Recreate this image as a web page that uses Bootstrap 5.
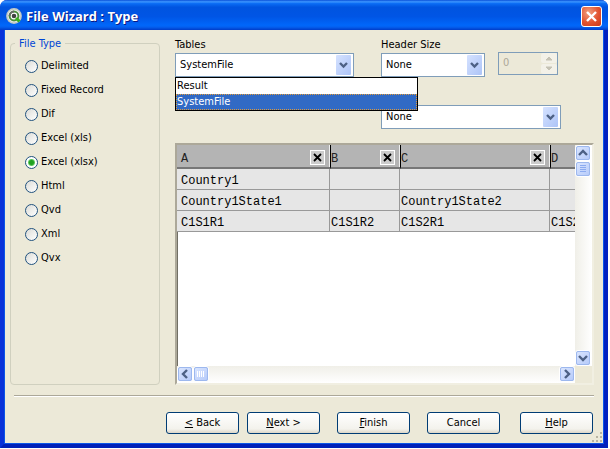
<!DOCTYPE html>
<html lang="en">
<head>
<meta charset="utf-8">
<meta name="viewport" content="width=device-width, initial-scale=1">
<title>File Wizard : Type</title>
<link href="https://cdn.jsdelivr.net/npm/bootstrap@5.3.0/dist/css/bootstrap.min.css" rel="stylesheet">
<style>
body{background:#fff;color:#000;font-family:"DejaVu Sans Condensed","Noto Sans",sans-serif;font-size:11px;line-height:16px}
.wizard{min-height:calc(100vh - 1px);margin-right:2px;background:#ece9d8;border:solid #0831d9;border-width:0 4px 4px;border-color:#0831d9 #0020c0 #0020b8 #0831d9;box-shadow:inset 1px -1px #0a55e8,inset -1px 0 #0a55e8;border-radius:7px 7px 0 0}
.titlebar{height:30px;margin:0 -4px;padding:2px 6px 0;border-radius:7px 7px 0 0;background:linear-gradient(#0a50d8 0,#3c96ff 6%,#0a6cf4 12%,#0054e0 24%,#0055e5 55%,#0067fa 84%,#0460f0 90%,#003cc8 100%)}
.titlebar h1{font:bold 13px/20px "Open Sans","Noto Sans",sans-serif;color:#fff;text-shadow:1px 1px #0a1883}
.close-btn{width:21px;height:21px;border:1px solid #fff;border-radius:3px;background:radial-gradient(circle at 35% 30%,#f0a080,#e25330 55%,#c8381a);line-height:0}
.main{padding:7px 10px 10px 6px;gap:15px}
.types{width:150px;position:relative;border:1px solid #d0d0bf;border-radius:4px;margin-top:6px;padding:10px 14px}
.types legend{position:absolute;top:-8px;left:4px;width:auto;padding:0 4px;margin:0;background:#ece9d8;color:#0046d5;font-size:11px;line-height:16px}
.types .form-check{height:24px;gap:3px;min-height:0;padding:0;margin:0}
.types .form-check-input{float:none;width:13px;height:13px;margin:0;border:1px solid #21527f;background:linear-gradient(135deg,#dcdcd7,#fff)}
.types .form-check-input:checked{background:radial-gradient(circle,#21a121 0 2px,#5cc55c 3px,#fff 4px)}
.fields{display:grid;grid-template-columns:206px 117px auto;justify-content:start}
.fields label{display:block;height:16px;line-height:16px}
.combo{height:24px;padding:0 24px 0 4px;border:1px solid #7f9db9;border-radius:0;background-color:#fff;background-position:right 1px center;background-size:17px 20px;font-size:11px;line-height:22px;color:#000;--bs-form-select-bg-img:url("data:image/svg+xml,%3Csvg xmlns='http://www.w3.org/2000/svg' viewBox='0 0 17 20'%3E%3Cdefs%3E%3ClinearGradient id='g' x2='1' y2='1'%3E%3Cstop stop-color='%23d5e2ff'/%3E%3Cstop offset='1' stop-color='%23adc4f7'/%3E%3C/linearGradient%3E%3C/defs%3E%3Crect x='1' width='15' height='20' rx='1' fill='url(%23g)'/%3E%3Cpath d='M5 8l3.500 3.500 3.500-3.500' fill='none' stroke='%234d6185' stroke-width='2.4'/%3E%3C/svg%3E")}
.w-tables{width:179px}.w-header{width:104px}.w-extra{width:180px}
.options{position:absolute;top:40px;left:0;width:243px;z-index:5;border:1px solid #000;border-radius:0;background:#fff}
.options .list-group-item{height:16px;padding:0 1px;border:0;line-height:16px;background:#fff;color:#000}
.options .list-group-item.active{background:#316ac5;color:#fff;outline:1px dotted #e09a3a;outline-offset:-1px;margin:0}
.spinner{width:60px;height:23px;border:1px solid #7f9db9;margin-top:15px}
.spinner input{min-width:0;border:0;background:none;padding:0 0 2px 4px;color:#aca899;font-size:11px}
.spinner button{width:16px;height:10px;border:0;padding:0;background:#f3f1e8;border-radius:2px;line-height:0}
.extra{grid-column:2/4;margin-top:28px}
.preview{margin-top:14px;border:2px solid;border-color:#aca899 #f1efe2 #f1efe2 #aca899;background:#fff;display:grid;grid-template:minmax(0,1fr) 17px/minmax(0,1fr) 17px;box-shadow:inset 1px 1px #716f64}
.sheet{overflow:hidden}
.sheet table{width:443px;table-layout:fixed;border-collapse:separate;border-spacing:0;font:12px/16px "Liberation Mono",monospace}
.sheet th{height:23px;padding:2px 4px 0;font-weight:400;color:#222;background:#b4b4b4;border-bottom:2px solid #777;box-shadow:inset -1px 0 #eee}
.sheet th span{padding-top:4px}
.sheet td{height:21px;padding:4px 4px 0;line-height:16px;background:#e6e6e6;border:solid #999;border-width:0 1px 1px 0;white-space:nowrap}
.sheet th+th{border-left:1px solid #000;padding-left:0}
.sheet td+td{padding-left:1px}
.c-a{width:153px}.c-b,.c-d{width:70px}.c-c{width:150px}
.col-x{width:15px;height:15px;padding:0;border:1px solid #fff;background:#ccc;line-height:0;margin-right:1px}
.track{background:linear-gradient(90deg,#f0efe8,#fff)}
.track-h{background:linear-gradient(#f0efe8,#fff)}
.corner{background:#ece9d8}
.sb{width:16px;height:16px;padding:0;line-height:0;border:1px solid #fff;outline:1px solid #9db8ee;outline-offset:-2px;border-radius:3px;background:linear-gradient(135deg,#dce7ff,#b4c9f9);flex:none}
.rule{margin:0 10px;height:2px;background:#aca899;border-bottom:1px solid #fff}
.actions{padding:15px 11px 10px}
.actions .btn{width:73px;height:22px;padding:0;border:1px solid #003c74;border-radius:3px;background:linear-gradient(#fff,#f3f2ec 80%,#dcd6c8);color:#000;font-size:11px;line-height:20px}
.g-s{margin-right:8px}.g-m{margin-right:17px}.g-l{margin-right:20px}
.grip{position:absolute;right:1px;bottom:1px}
</style>
<script src="https://cdn.jsdelivr.net/npm/bootstrap@5.3.0/dist/js/bootstrap.bundle.min.js"></script>
</head>
<body>
<div class="wizard d-flex flex-column position-relative">
  <header class="titlebar d-flex align-items-center">
    <svg width="16" height="16" viewBox="0 0 16 16" aria-hidden="true"><circle cx="8" cy="8" r="7.900" fill="#c4cbc6"/><circle cx="8" cy="8" r="6.200" fill="#f2f4f0"/><circle cx="8" cy="8" r="4.400" fill="#fff" stroke="#4a8f3c" stroke-width="2"/><path d="M3.600 8a4.400 4.400 0 0 1 4.400-4.400" fill="none" stroke="#666c66" stroke-width="2"/><circle cx="8" cy="8" r="2.300" fill="#3f4440"/><path d="M10 10l3.500 3.500" stroke="#35b01e" stroke-width="3"/></svg>
    <h1 class="m-0 ms-1 flex-fill">File Wizard : Type</h1>
    <button type="button" class="close-btn p-0" aria-label="Close"><svg width="19" height="19" viewBox="0 0 19 19"><path d="M5 5l9 9M14 5l-9 9" stroke="#fff" stroke-width="2.4"/></svg></button>
  </header>
  <main class="main d-flex flex-fill">
    <fieldset class="types flex-shrink-0">
      <legend>File Type</legend>
      <div class="form-check d-flex align-items-center"><input class="form-check-input" type="radio" name="type" id="t1"><label for="t1">Delimited</label></div>
      <div class="form-check d-flex align-items-center"><input class="form-check-input" type="radio" name="type" id="t2"><label for="t2">Fixed Record</label></div>
      <div class="form-check d-flex align-items-center"><input class="form-check-input" type="radio" name="type" id="t3"><label for="t3">Dif</label></div>
      <div class="form-check d-flex align-items-center"><input class="form-check-input" type="radio" name="type" id="t4"><label for="t4">Excel (xls)</label></div>
      <div class="form-check d-flex align-items-center"><input class="form-check-input" type="radio" name="type" id="t5" checked><label for="t5">Excel (xlsx)</label></div>
      <div class="form-check d-flex align-items-center"><input class="form-check-input" type="radio" name="type" id="t6"><label for="t6">Html</label></div>
      <div class="form-check d-flex align-items-center"><input class="form-check-input" type="radio" name="type" id="t7"><label for="t7">Qvd</label></div>
      <div class="form-check d-flex align-items-center"><input class="form-check-input" type="radio" name="type" id="t8"><label for="t8">Xml</label></div>
      <div class="form-check d-flex align-items-center"><input class="form-check-input" type="radio" name="type" id="t9"><label for="t9">Qvx</label></div>
    </fieldset>
    <section class="d-flex flex-column flex-fill">
      <div class="fields">
        <div class="position-relative">
          <label for="tables">Tables</label>
          <select id="tables" class="form-select combo w-tables"><option>Result</option><option selected>SystemFile</option></select>
          <div class="list-group options">
            <button type="button" class="list-group-item list-group-item-action">Result</button>
            <button type="button" class="list-group-item list-group-item-action active">SystemFile</button>
          </div>
        </div>
        <div>
          <label for="header">Header Size</label>
          <select id="header" class="form-select combo w-header"><option>None</option></select>
        </div>
        <div class="spinner d-flex">
          <input type="text" class="flex-fill" value="0" aria-label="Header lines" disabled>
          <div class="d-flex flex-column">
            <button type="button" aria-label="Increase" disabled><svg width="16" height="10"><path d="M5 7l3-3 3 3z" fill="#c5c2b4" stroke="#c5c2b4"/></svg></button>
            <button type="button" class="mt-auto" aria-label="Decrease" disabled><svg width="16" height="10"><path d="M5 3l3 3 3-3z" fill="#c5c2b4" stroke="#c5c2b4"/></svg></button>
          </div>
        </div>
        <div class="extra"><select class="form-select combo w-extra" aria-label="Labels"><option>None</option></select></div>
      </div>
      <div class="preview flex-fill">
        <div class="sheet">
          <table>
            <colgroup><col class="c-a"><col class="c-b"><col class="c-c"><col class="c-d"></colgroup>
            <thead><tr>
              <th><div class="d-flex justify-content-between align-items-center"><span>A</span><button type="button" class="col-x" aria-label="Remove A"><svg width="13" height="13"><path d="M3 3l7 7M10 3l-7 7" stroke="#000" stroke-width="1.8"/></svg></button></div></th>
              <th><div class="d-flex justify-content-between align-items-center"><span>B</span><button type="button" class="col-x" aria-label="Remove B"><svg width="13" height="13"><path d="M3 3l7 7M10 3l-7 7" stroke="#000" stroke-width="1.8"/></svg></button></div></th>
              <th><div class="d-flex justify-content-between align-items-center"><span>C</span><button type="button" class="col-x" aria-label="Remove C"><svg width="13" height="13"><path d="M3 3l7 7M10 3l-7 7" stroke="#000" stroke-width="1.8"/></svg></button></div></th>
              <th><div class="d-flex"><span>D</span></div></th>
            </tr></thead>
            <tbody>
              <tr><td>Country1</td><td></td><td></td><td></td></tr>
              <tr><td>Country1State1</td><td></td><td>Country1State2</td><td></td></tr>
              <tr><td>C1S1R1</td><td>C1S1R2</td><td>C1S2R1</td><td>C1S2R2</td></tr>
            </tbody>
          </table>
        </div>
        <div class="track d-flex flex-column">
          <button type="button" class="sb" aria-label="Scroll up"><svg width="14" height="14"><path d="M3 9l4-4 4 4" fill="none" stroke="#4d6185" stroke-width="2.4"/></svg></button>
          <button type="button" class="sb" aria-label="Vertical position"><svg width="14" height="14"><path d="M4 3.500h6M4 5.500h6M4 7.500h6M4 9.500h6" stroke="#8cabf0"/></svg></button>
          <button type="button" class="sb mt-auto" aria-label="Scroll down"><svg width="14" height="14"><path d="M3 5l4 4 4-4" fill="none" stroke="#4d6185" stroke-width="2.4"/></svg></button>
        </div>
        <div class="track-h d-flex">
          <button type="button" class="sb" aria-label="Scroll left"><svg width="14" height="14"><path d="M9 3l-4 4 4 4" fill="none" stroke="#4d6185" stroke-width="2.4"/></svg></button>
          <button type="button" class="sb" aria-label="Horizontal position"><svg width="14" height="14"><path d="M3.500 4v6M5.500 4v6M7.500 4v6M9.500 4v6" stroke="#fff"/></svg></button>
          <button type="button" class="sb ms-auto" aria-label="Scroll right"><svg width="14" height="14"><path d="M5 3l4 4-4 4" fill="none" stroke="#4d6185" stroke-width="2.4"/></svg></button>
        </div>
        <div class="corner"></div>
      </div>
    </section>
  </main>
  <div class="rule"></div>
  <footer class="actions d-flex justify-content-end">
    <button type="button" class="btn g-s"><u>&lt;</u> Back</button>
    <button type="button" class="btn g-m"><u>N</u>ext &gt;</button>
    <button type="button" class="btn g-m"><u>F</u>inish</button>
    <button type="button" class="btn g-l">Cancel</button>
    <button type="button" class="btn"><u>H</u>elp</button>
  </footer>
  <svg class="grip" width="12" height="12" fill="#b8b4a2" aria-hidden="true"><path d="M9 1h2v2h-2zM5 5h2v2H5zM9 5h2v2H9zM1 9h2v2H1zM5 9h2v2H5zM9 9h2v2H9z"/></svg>
</div>
</body>
</html>
